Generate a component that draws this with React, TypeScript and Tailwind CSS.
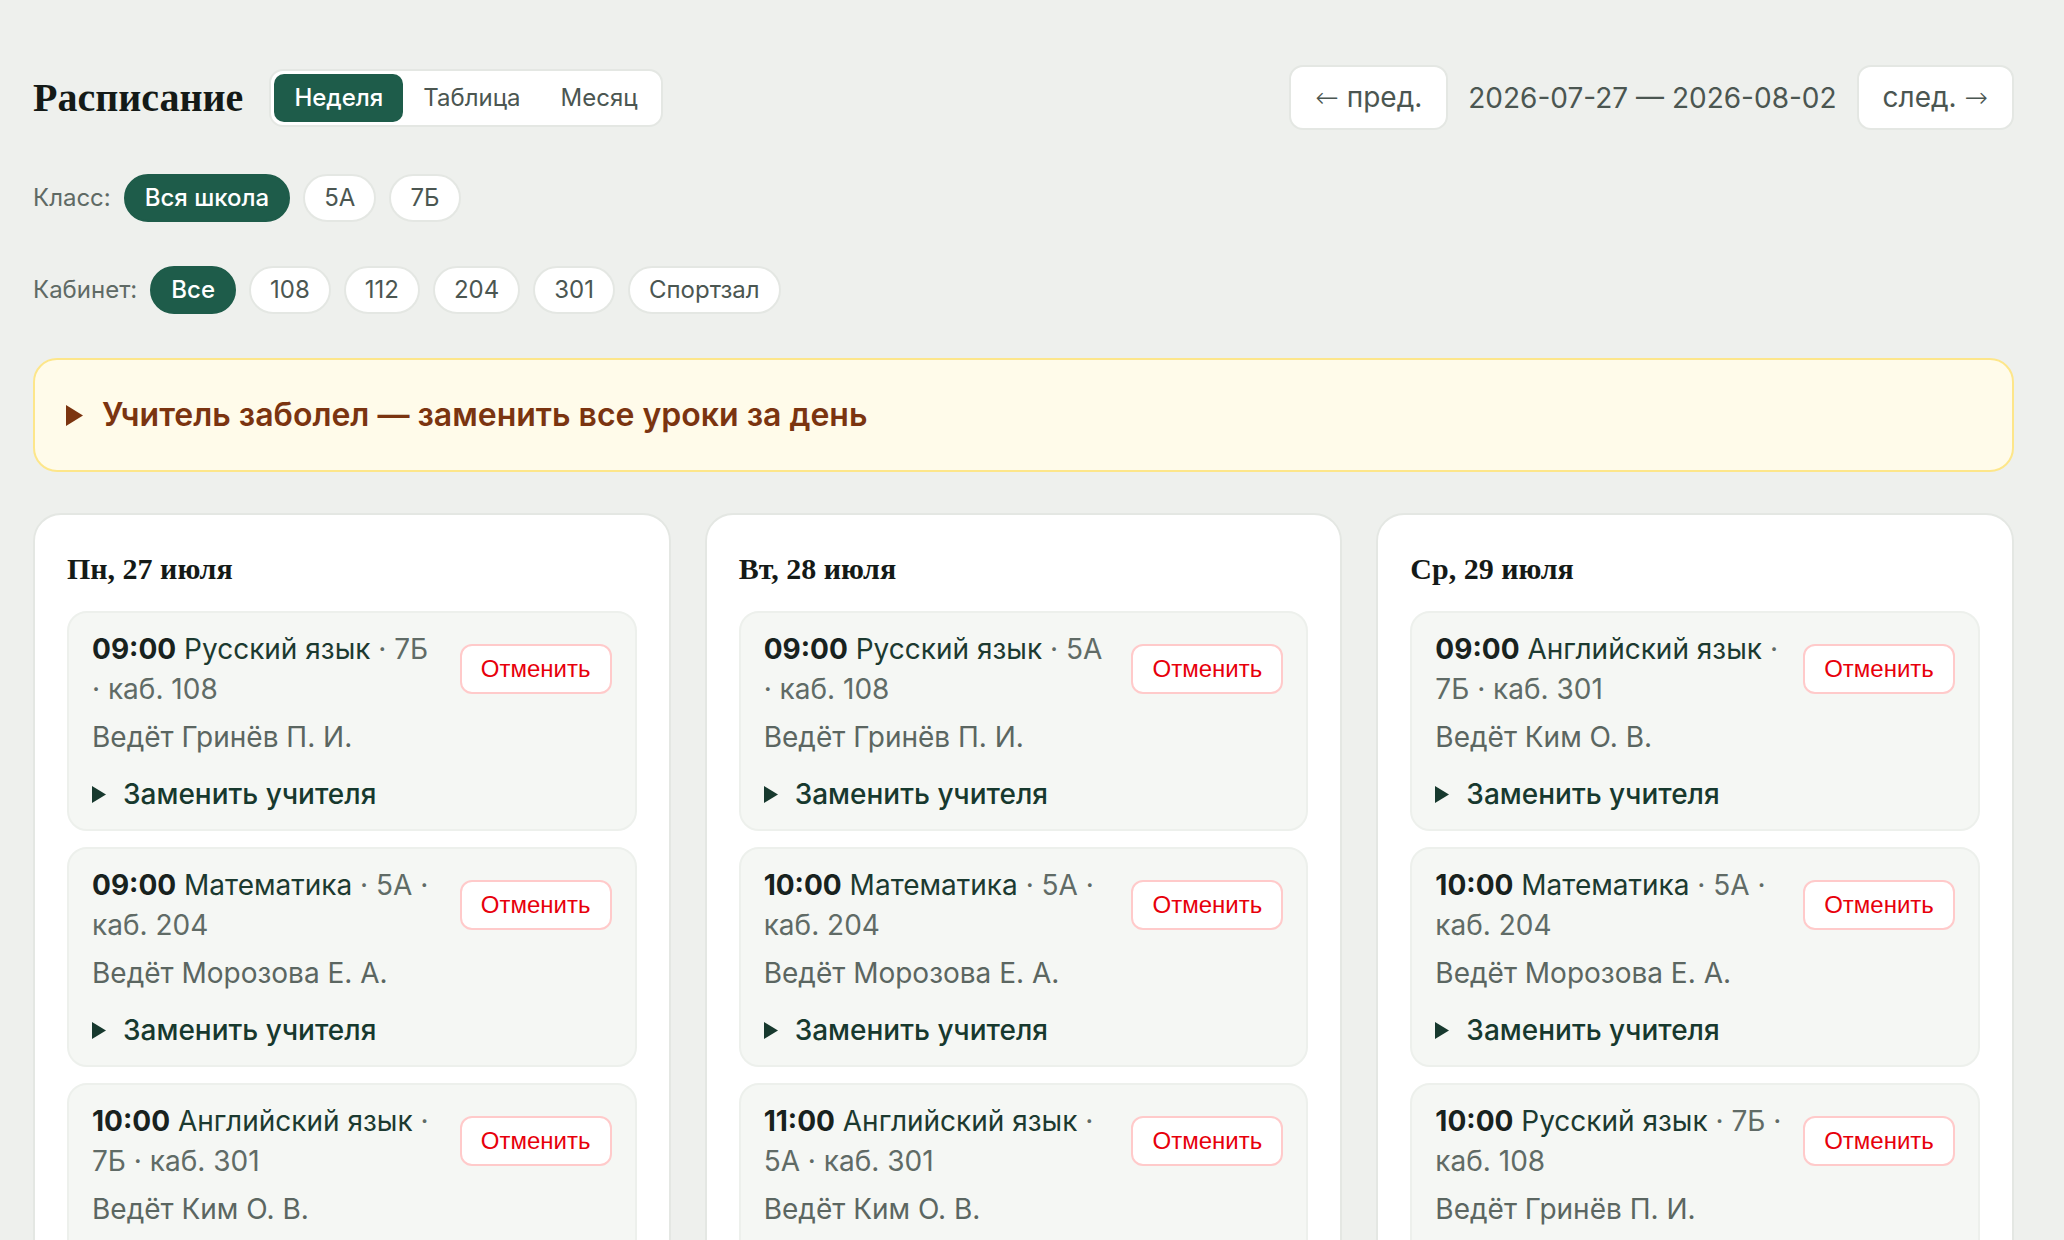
const lessons = [
  {
    day: "Пн, 27 июля",
    items: [
      { time: "09:00", subject: "Русский язык", rest: " · 7Б · каб. 108", teacher: "Гринёв П. И." },
      { time: "09:00", subject: "Математика", rest: " · 5А · каб. 204", teacher: "Морозова Е. А." },
      { time: "10:00", subject: "Английский язык", rest: " · 7Б · каб. 301", teacher: "Ким О. В." },
    ],
  },
  {
    day: "Вт, 28 июля",
    items: [
      { time: "09:00", subject: "Русский язык", rest: " · 5А · каб. 108", teacher: "Гринёв П. И." },
      { time: "10:00", subject: "Математика", rest: " · 5А · каб. 204", teacher: "Морозова Е. А." },
      { time: "11:00", subject: "Английский язык", rest: " · 5А · каб. 301", teacher: "Ким О. В." },
    ],
  },
  {
    day: "Ср, 29 июля",
    items: [
      { time: "09:00", subject: "Английский язык", rest: " · 7Б · каб. 301", teacher: "Ким О. В." },
      { time: "10:00", subject: "Математика", rest: " · 5А · каб. 204", teacher: "Морозова Е. А." },
      { time: "10:00", subject: "Русский язык", rest: " · 7Б · каб. 108", teacher: "Гринёв П. И." },
    ],
  },
];

const classes = ["Вся школа", "5А", "7Б"];
const rooms = ["Все", "108", "112", "204", "301", "Спортзал"];

const serif = "font-['Liberation_Serif',serif]";
const arrow = "font-['DejaVu_Sans',sans-serif] font-light";

const Triangle = ({ className }: { className: string }) => (
  <svg viewBox="0 0 10 12" className={className} fill="currentColor" preserveAspectRatio="none">
    <polygon points="0,0 10,6 0,12" />
  </svg>
);

const Pill = ({ label, active }: { label: string; active?: boolean }) => (
  <button
    className={
      active
        ? "h-[48px] rounded-full border-2 border-[#1e5c4a] bg-[#1e5c4a] px-[19px] text-[24px] font-medium text-white"
        : "h-[48px] rounded-full border-2 border-[#e4e7e3] bg-white px-[19px] text-[24px] text-[#4b5651]"
    }
  >
    {label}
  </button>
);

const FilterRow = ({ title, items }: { title: string; items: string[] }) => (
  <div className="flex items-center gap-[13px]">
    <span className="text-[24px] text-[#5f6a65]">{title}</span>
    {items.map((it, i) => (
      <Pill key={it} label={it} active={i === 0} />
    ))}
  </div>
);

const Lesson = ({ l }: { l: (typeof lessons)[0]["items"][0] }) => (
  <div className="rounded-[20px] border-2 border-[#edf0ec] bg-[#f5f7f4] px-[23px] pt-[16px] pb-[15px]">
    <div className="flex items-center gap-4">
      <p className="flex-1 text-[28px] leading-[40px]">
        <b className="font-bold text-[#18221e]">{l.time}</b>{" "}
        <span className="text-[#1c3a30]">{l.subject}</span>
        <span className="text-[#606b66]">{l.rest}</span>
      </p>
      <button className="h-[50px] w-[152px] shrink-0 rounded-[12px] border-2 border-[#ffcaca] bg-white font-['Liberation_Sans',sans-serif] text-[24px] text-[#e7000b]">
        Отменить
      </button>
    </div>
    <p className="mt-[8px] text-[28px] leading-[40px] text-[#5b6661]">Ведёт {l.teacher}</p>
    <details className="mt-[17px]">
      <summary className="flex list-none items-center gap-[17px] text-[28px] leading-[40px] font-medium text-[#17392e] [&::-webkit-details-marker]:hidden">
        <Triangle className="h-[17px] w-[14px]" />
        Заменить учителя
      </summary>
    </details>
  </div>
);

export default function App() {
  return (
    <div className="min-h-screen bg-[#eef0ed] pt-[65px] pr-[50px] pb-10 pl-[33px] font-['Inter',sans-serif]">
      <div className="flex flex-col gap-[44px]">
        <header className="flex h-[65px] items-center justify-between">
          <div className="flex items-center gap-[26px]">
            <h1 className={`${serif} text-[40px] font-bold text-[#141a17]`}>Расписание</h1>
            <div className="flex h-[58px] items-center rounded-[14px] border-2 border-[#e4e7e3] bg-white p-[3px]">
              <button className="h-[48px] rounded-[10px] bg-[#1e5c4a] px-5 text-[24px] font-medium text-white">Неделя</button>
              <button className="h-[48px] rounded-[10px] px-5 text-[24px] text-[#4b5651]">Таблица</button>
              <button className="h-[48px] rounded-[10px] px-5 text-[24px] text-[#4b5651]">Месяц</button>
            </div>
          </div>
          <div className="flex items-center gap-5">
            <button className="h-[65px] rounded-[14px] border-2 border-[#e4e7e3] bg-white px-[24px] text-[28px] text-[#4b5651]">
              <span className={arrow}>←</span> пред.
            </button>
            <span className="text-[28px] text-[#4b5651]">2026-07-27 — 2026-08-02</span>
            <button className="h-[65px] rounded-[14px] border-2 border-[#e4e7e3] bg-white px-[24px] text-[28px] text-[#4b5651]">
              след. <span className={arrow}>→</span>
            </button>
          </div>
        </header>

        <FilterRow title="Класс:" items={classes} />
        <FilterRow title="Кабинет:" items={rooms} />

        <details className="rounded-[24px] border-2 border-[#fde68a] bg-[#fffbea] px-[31px] py-[32px]">
          <summary className="flex list-none items-center gap-[19px] text-[32px] leading-[46px] font-semibold text-[#7b3410] [&::-webkit-details-marker]:hidden">
            <Triangle className="h-[21px] w-[17px]" />
            Учитель заболел — заменить все уроки за день
          </summary>
        </details>

        <div className="-mt-[3px] grid grid-cols-3 gap-[34px]">
          {lessons.map((d) => (
            <section key={d.day} className="rounded-[28px] border-2 border-[#e4e7e3] bg-white px-[32px] pt-[33px] pb-[32px]">
              <h2 className={`${serif} mb-[21px] text-[30px] leading-[42px] font-bold text-[#141a17]`}>{d.day}</h2>
              <div className="flex flex-col gap-[16px]">
                {d.items.map((l, i) => (
                  <Lesson key={i} l={l} />
                ))}
              </div>
            </section>
          ))}
        </div>
      </div>
    </div>
  );
}
